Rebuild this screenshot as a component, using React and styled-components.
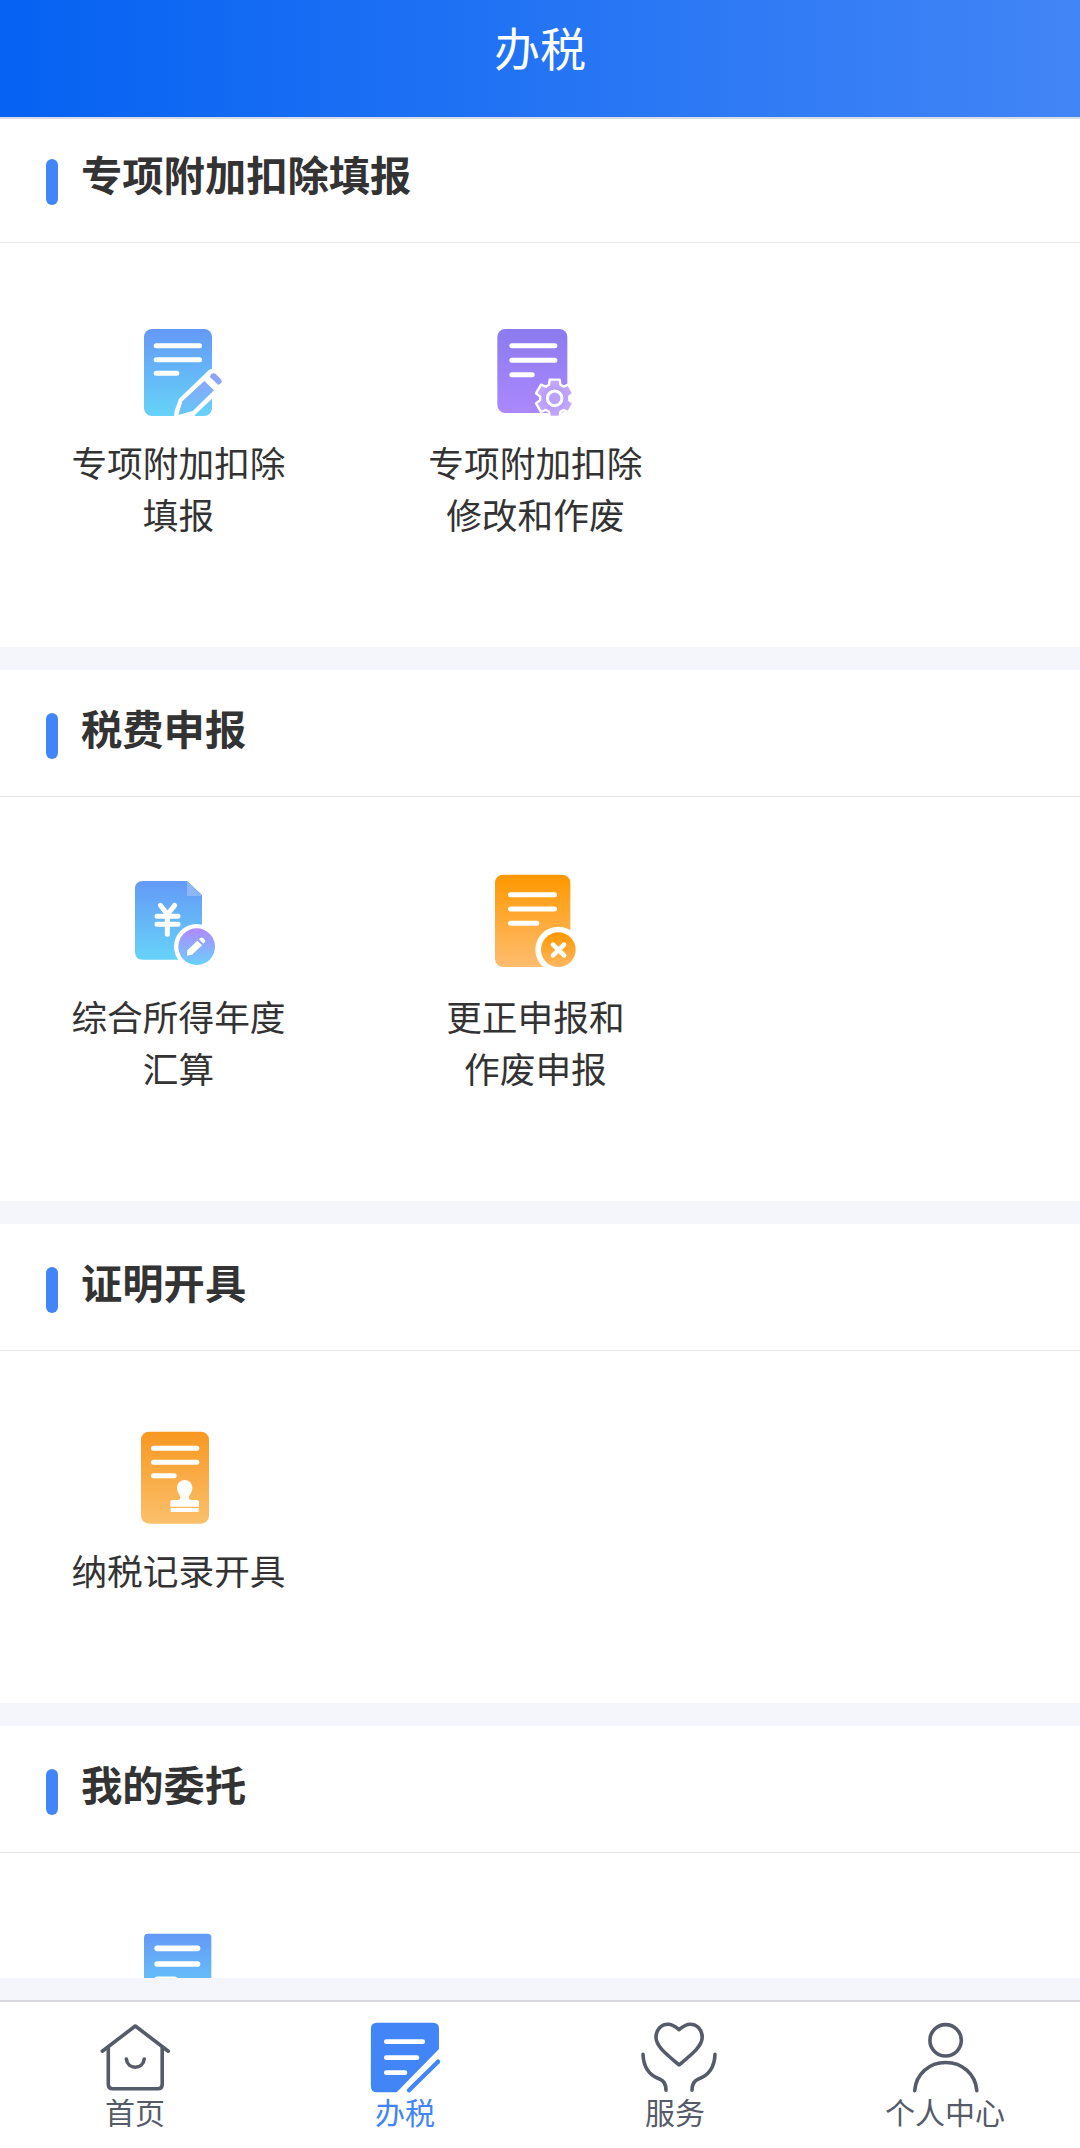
import React from "react";
import styled, { createGlobalStyle } from "styled-components";

const GlobalStyle = createGlobalStyle`
    body {
        margin: 0;
        background: #ffffff;
        font-family: "Noto Sans CJK SC", "Noto Sans", sans-serif;
        color: #333333;
    }
`;

const Gradient = ({ id, from, to }) => (
    <linearGradient id={id} x1="0" y1="0" x2="0" y2="1">
        <stop offset="0" stopColor={from} />
        <stop offset="1" stopColor={to} />
    </linearGradient>
);

// the three text lines on every document icon
const DocLines = ({ x, width, short, ys, height = 15 }) => (
    <g fill="#fff">
        {ys.map((y, i) => (
            <rect
                key={y}
                x={x}
                y={y - height / 2}
                width={i === 2 ? short : width}
                height={height}
                rx={height / 2}
            />
        ))}
    </g>
);

const FillIcon = () => (
    <TileSvg viewBox="-6 -12 360 360">
        <defs>
            <Gradient id="fillPage" from="#6499f7" to="#66d3f8" />
            <linearGradient
                id="fillPen"
                gradientUnits="userSpaceOnUse"
                x1="0"
                y1="190"
                x2="0"
                y2="317"
            >
                <stop offset="0" stopColor="#949ffb" />
                <stop offset="1" stopColor="#62c8f8" />
            </linearGradient>
        </defs>
        <rect x="72" y="57" width="204" height="261" rx="24" fill="url(#fillPage)" />
        <DocLines x={101} width={145} short={77} ys={[107, 149, 190]} />
        <path
            d="M162 319L164 302L177 266L266 181Q272 176 280 177L310 210L290 245L276 266L227 313L223 319Z"
            fill="#fff"
        />
        <path d="M253 213L282 241L218 303L175 315L187 274Z" fill="url(#fillPen)" />
        <path
            d="M274 192Q281 187 287 192L302 207Q308 214 303 219L295 225L269 200Z"
            fill="url(#fillPen)"
        />
    </TileSvg>
);

const gearPath = (cx, cy) => {
    const points = [];
    for (let i = 0; i < 6; i++) {
        [
            [-23, 44],
            [-15, 58],
            [15, 58],
            [23, 44],
        ].forEach(([deg, r]) => {
            const a = ((i * 60 + deg - 90) * Math.PI) / 180;
            points.push(
                `${(cx + r * Math.cos(a)).toFixed(1)} ${(cy + r * Math.sin(a)).toFixed(1)}`
            );
        });
    }
    return `M${points.join("L")}Z`;
};

const ModifyIcon = () => (
    <TileSvg viewBox="-16 -12 360 360">
        <defs>
            <Gradient id="modPage" from="#8b7bee" to="#ab88fe" />
            <radialGradient id="modGear">
                <stop offset="0" stopColor="#a794f6" />
                <stop offset="1" stopColor="#c8a9fe" />
            </radialGradient>
            <clipPath id="modClip">
                <rect x="0" y="0" width="278" height="318" />
            </clipPath>
        </defs>
        <rect x="51" y="57" width="210" height="252" rx="24" fill="url(#modPage)" />
        <DocLines x={87} width={144} short={76} ys={[107, 151, 194]} />
        <g clipPath="url(#modClip)">
            <path
                d={gearPath(223, 265)}
                fill="url(#modGear)"
                stroke="#fff"
                strokeWidth="7"
                strokeLinejoin="round"
            />
        </g>
        <circle cx="223" cy="265" r="22" fill="#b9a3fa" stroke="#fff" strokeWidth="9" />
    </TileSvg>
);

const SettleIcon = () => (
    <TileSvg viewBox="-6 0 360 360">
        <defs>
            <Gradient id="setPage" from="#6499f7" to="#66d3f8" />
            <Gradient id="setBadge" from="#b088ff" to="#68d0fa" />
        </defs>
        <path
            d="M69 63H201L246 105V299H69Q45 299 45 275V87Q45 63 69 63Z"
            fill="url(#setPage)"
        />
        <path d="M201 63L246 108H201Z" fill="#8db7f9" />
        <path
            d="M121 136L142 163L164 136M142 163V223M111 169H174M111 193H174"
            fill="none"
            stroke="#fff"
            strokeWidth="15"
            strokeLinecap="round"
            strokeLinejoin="round"
        />
        <circle cx="230" cy="260" r="68" fill="#fff" />
        <circle cx="230" cy="260" r="55" fill="url(#setBadge)" />
        <path d="M232 242L246 256L216 284L201 287L202 271Z" fill="#fff" />
        <path d="M237 238Q243 230 249 234L255 240Q258 246 250 251Z" fill="#fff" />
    </TileSvg>
);

const CorrectIcon = () => (
    <TileSvg viewBox="-16 0 360 360">
        <defs>
            <Gradient id="corPage" from="#ff9800" to="#ffbd70" />
            <Gradient id="corBadge" from="#ff9800" to="#ffb760" />
        </defs>
        <rect x="44" y="44" width="226" height="277" rx="24" fill="url(#corPage)" />
        <DocLines x={83} width={147} short={94} ys={[104, 147, 190]} />
        <circle cx="234" cy="269" r="69" fill="#fff" />
        <circle cx="234" cy="269" r="52" fill="url(#corBadge)" />
        <path
            d="M218 254L251 286M251 254L218 286"
            stroke="#fff"
            strokeWidth="14"
            strokeLinecap="round"
        />
    </TileSvg>
);

const RecordIcon = () => (
    <TileSvg viewBox="-6 -3 360 360">
        <defs>
            <Gradient id="recPage" from="#f89821" to="#fbc06c" />
        </defs>
        <rect x="63" y="50" width="204" height="276" rx="24" fill="url(#recPage)" />
        <DocLines x={93} width={145} short={77} ys={[100, 142, 182]} />
        <path
            d="M194 195A23 23 0 0 1 217 218C217 234 207 237 207 248Q207 255 213 255H230Q237 255 237 262V275H151V262Q151 255 158 255H174Q181 255 181 248C181 237 171 234 171 218A23 23 0 0 1 194 195Z"
            fill="#fff"
        />
        <rect x="152" y="279" width="84" height="12" fill="#fff" />
    </TileSvg>
);

const EntrustIcon = () => (
    <TileSvg viewBox="-6 0 360 360">
        <defs>
            <Gradient id="entPage" from="#6499f7" to="#66d3f8" />
        </defs>
        <rect x="72" y="53" width="202" height="220" rx="12" fill="url(#entPage)" />
        <DocLines x={103} width={138} short={70} ys={[97, 144, 190]} height={17} />
    </TileSvg>
);

const HomeIcon = () => (
    <TabSvg viewBox="0 0 80 80">
        <path d="M7.3 33.2L40.3 8L73.3 33.2" />
        <path d="M13.3 30V66.5Q13.3 70.7 17.5 70.7H63Q67.2 70.7 67.2 66.5V30" />
        <path d="M31.4 41C32.5 52 48 52 49.2 41" />
    </TabSvg>
);

const TaxIcon = () => (
    <TabSvg viewBox="0 0 80 80" $solid>
        <path d="M11.9 4.7H68Q74 4.7 74 10.7V31L31.7 74.3H11.9Q5.9 74.3 5.9 68.3V10.7Q5.9 4.7 11.9 4.7Z" />
        <path
            d="M21.3 23.7H57.7M21.3 39.7H52M21.3 54.7H40"
            stroke="#fff"
            strokeWidth="4.7"
            strokeLinecap="round"
        />
        <path d="M73 43.7L44 72.3" stroke="#4285f6" strokeWidth="4.4" strokeLinecap="round" />
    </TabSvg>
);

const ServiceIcon = () => (
    <TabSvg viewBox="0 0 80 80">
        <path d="M44.1 11.7C40 8.2 36.5 6.3 33 6.3C26 6.3 21 12 21 19.3C21 28 30.5 35.5 44.1 47C57.7 35.5 67.2 28 67.2 19.3C67.2 12 62.2 6.3 55.2 6.3C51.7 6.3 48.2 8.2 44.1 11.7Z" />
        <path d="M8 36.3C8.5 49 14.5 57.5 24.5 61Q31 63.5 31 72.3" />
        <path d="M80 36.3C79.5 49 73.5 57.5 63.5 61Q57 63.5 57 72.3" />
    </TabSvg>
);

const MineIcon = () => (
    <TabSvg viewBox="0 0 80 80">
        <circle cx="40.6" cy="22.3" r="15.7" />
        <path d="M9.7 72.6C11 56 24 44.5 40.7 44.5S70.5 56 71.8 72.6" />
    </TabSvg>
);

const sections = [
    {
        title: "专项附加扣除填报",
        items: [
            { icon: FillIcon, lines: ["专项附加扣除", "填报"] },
            { icon: ModifyIcon, lines: ["专项附加扣除", "修改和作废"] },
        ],
    },
    {
        title: "税费申报",
        items: [
            { icon: SettleIcon, lines: ["综合所得年度", "汇算"] },
            { icon: CorrectIcon, lines: ["更正申报和", "作废申报"] },
        ],
    },
    {
        title: "证明开具",
        items: [{ icon: RecordIcon, lines: ["纳税记录开具"] }],
    },
    {
        title: "我的委托",
        items: [{ icon: EntrustIcon, lines: [] }],
    },
];

const tabs = [
    { label: "首页", icon: HomeIcon },
    { label: "办税", icon: TaxIcon, active: true },
    { label: "服务", icon: ServiceIcon },
    { label: "个人中心", icon: MineIcon },
];

function App() {
    return (
        <>
            <GlobalStyle />
            <Page>
                <Header>办税</Header>
                <Content>
                    {sections.map(section => (
                        <Section key={section.title}>
                            <SectionTitle>
                                <Marker />
                                <h2>{section.title}</h2>
                            </SectionTitle>
                            <Tiles>
                                {section.items.map(({ icon: Icon, lines }, i) => (
                                    <Tile key={i}>
                                        <Icon />
                                        {lines.map(line => (
                                            <TileLabel key={line}>{line}</TileLabel>
                                        ))}
                                    </Tile>
                                ))}
                            </Tiles>
                        </Section>
                    ))}
                </Content>
                <TabBar>
                    {tabs.map(({ label, icon: Icon, active }) => (
                        <Tab key={label} $active={active}>
                            <Icon />
                            <span>{label}</span>
                        </Tab>
                    ))}
                </TabBar>
            </Page>
        </>
    );
}

const Page = styled.div`
    display: flex;
    flex-direction: column;
    width: 1080px;
    height: 2148px;
    overflow: hidden;
    background: #f4f6fb;
`;

const Header = styled.header`
    position: relative;
    z-index: 1;
    flex: none;
    box-sizing: border-box;
    height: 119px;
    margin-bottom: -3px;
    padding-top: 12px;
    border-bottom: 2px solid #d9dce6;
    background: linear-gradient(90deg, #0562f2, #4285f6) padding-box;
    color: #fff;
    font-size: 46px;
    line-height: 68px;
    text-align: center;
`;

const Content = styled.main`
    flex: 1;
    min-height: 0;
    margin-bottom: 22px;
    overflow: hidden;
`;

const Section = styled.section`
    background: #fff;

    & + & {
        margin-top: 23px;
    }
`;

const SectionTitle = styled.div`
    display: flex;
    align-items: flex-start;
    box-sizing: border-box;
    height: 127px;
    padding: 27px 46px 0;
    border-bottom: 1px solid #e5e6ea;

    h2 {
        margin: 0 0 0 23px;
        font-size: 41.3px;
        line-height: 60px;
        font-weight: 700;
    }
`;

const Marker = styled.i`
    width: 12px;
    height: 46px;
    margin-top: 16px;
    border-radius: 6px;
    background: #4285f6;
`;

const Tiles = styled.div`
    display: grid;
    grid-template-columns: repeat(3, 33.05%);
    padding: 63px 0 107px;
`;

const Tile = styled.div`
    display: flex;
    flex-direction: column;
    align-items: center;
`;

const TileSvg = styled.svg`
    width: 120px;
    height: 120px;
    margin-bottom: 10px;
`;

const TileLabel = styled.span`
    font-size: 35.7px;
    line-height: 52px;
`;

const TabBar = styled.nav`
    display: flex;
    flex: none;
    box-sizing: border-box;
    height: 148px;
    border-top: 2px solid #d8d9de;
    background: #fff;
`;

const Tab = styled.div`
    display: flex;
    flex: 1;
    flex-direction: column;
    align-items: center;
    padding-top: 16px;
    color: ${({ $active }) => ($active ? "#4285f6" : "#565b69")};
    font-size: 30px;
    line-height: 26px;
`;

const TabSvg = styled.svg`
    width: 80px;
    height: 80px;
    overflow: visible;
    fill: ${({ $solid }) => ($solid ? "#4285f6" : "none")};
    stroke: ${({ $solid }) => ($solid ? "none" : "#565b69")};
    stroke-width: 3.6;
    stroke-linecap: round;
    stroke-linejoin: round;
`;

export default App;
